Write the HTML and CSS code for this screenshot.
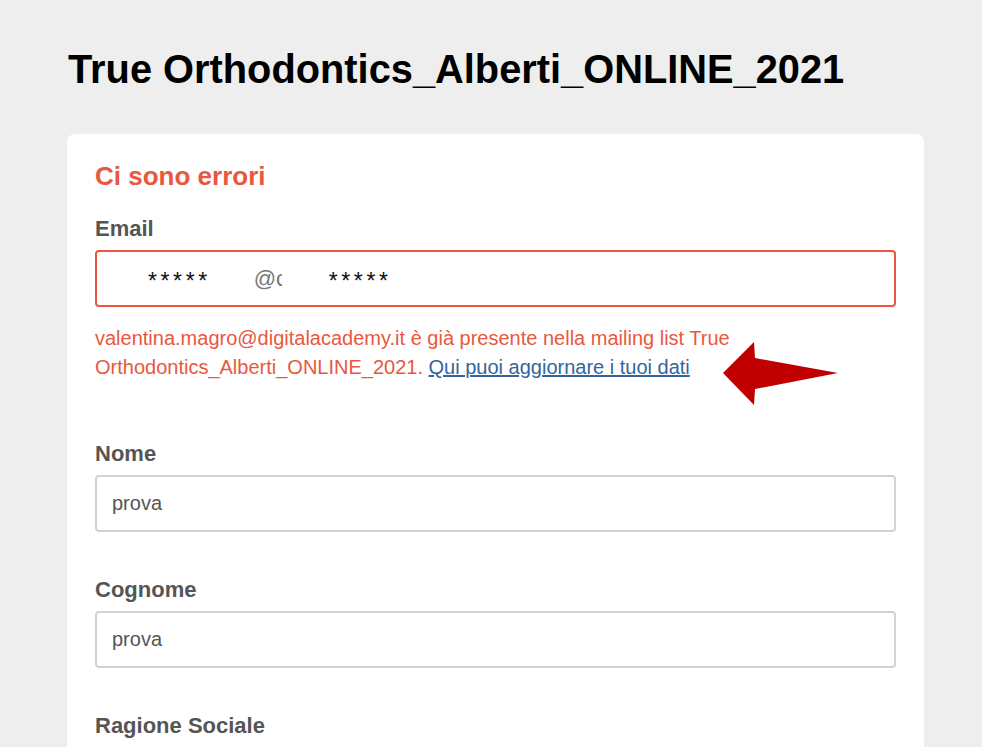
FILE: index.html
```html
<!DOCTYPE html>
<html lang="it">
<head>
  <meta charset="UTF-8">
  <title>True Orthodontics_Alberti_ONLINE_2021</title>
  <meta name="viewport" content="width=device-width, initial-scale=1.0">
  <link rel="stylesheet" href="styles.css">
</head>
<body>
  <div class="page">
    <h1 class="title">True Orthodontics_Alberti_ONLINE_2021</h1>

    <form class="card">
      <h2 class="errors">Ci sono errori</h2>

      <div class="field field-email">
        <label class="label">Email</label>
        <div class="input input-error">
          <span class="mask mask-first">*****</span>
          <span class="at">@c</span>
          <span class="mask mask-last">*****</span>
        </div>
        <p class="error-msg">valentina.magro@digitalacademy.it è già presente nella mailing list True Orthodontics_Alberti_ONLINE_2021. <a href="#">Qui puoi aggiornare i tuoi dati</a></p>
      </div>

      <div class="field">
        <label class="label">Nome</label>
        <div class="input">prova</div>
      </div>

      <div class="field">
        <label class="label">Cognome</label>
        <div class="input">prova</div>
      </div>

      <div class="field">
        <label class="label">Ragione Sociale</label>
        <div class="input"></div>
      </div>

      <!-- freccia di segnalazione -->
      <svg class="arrow" width="116" height="64" viewBox="0 0 116 64">
        <polygon points="0,31 31,0 32,16 115,31 32,47 31,63" fill="#c00000"/>
      </svg>
    </form>
  </div>
</body>
</html>
```

FILE: styles.css
```css
html, body {
  margin: 0;
  padding: 0;
  background-color: #eeeeee;
  font-family: 'Liberation Sans', Arial, sans-serif;
  overflow: hidden;
}
.page {
  width: 857px;
  margin-left: 67px;
  padding-top: 47px;
}
.title {
  margin: 0 0 42px 1px;
  font-size: 39.8px;
  line-height: 45px;
  font-weight: bold;
  color: #000;
}
.card {
  position: relative;
  background: #fff;
  border-radius: 8px;
  padding: 27px 28px 40px 28px;
}
.errors {
  margin: 0 0 25px 0;
  font-size: 26px;
  line-height: 30px;
  font-weight: bold;
  color: #e9573f;
}
.field {
  margin-bottom: 45px;
}
.field-email {
  margin-bottom: 59px;
}
.label {
  display: block;
  margin-bottom: 9px;
  font-size: 22px;
  line-height: 25px;
  font-weight: bold;
  color: #555;
}
.input {
  box-sizing: border-box;
  width: 801px;
  height: 57px;
  border: 2px solid #d2d2d2;
  border-radius: 4px;
  padding: 0 15px;
  display: flex;
  align-items: center;
  font-size: 20px;
  color: #555;
}
.input-error {
  border-color: #e9573f;
}
.mask {
  color: #111;
  font-size: 23px;
  letter-spacing: 3.6px;
  padding-top: 5px;
}
.mask-first {
  margin-left: 36px;
}
.at {
  display: inline-block;
  width: 28px;
  overflow: hidden;
  white-space: nowrap;
  margin-left: 43px;
  font-size: 22px;
  color: #777;
}
.mask-last {
  margin-left: 47px;
}
.error-msg {
  margin: 17px 0 0 0;
  width: 680px;
  font-size: 20px;
  line-height: 29px;
  color: #e9573f;
}
.error-msg a {
  color: #34659c;
  text-decoration: underline;
}
.arrow {
  position: absolute;
  left: 656px;
  top: 208px;
}
```
